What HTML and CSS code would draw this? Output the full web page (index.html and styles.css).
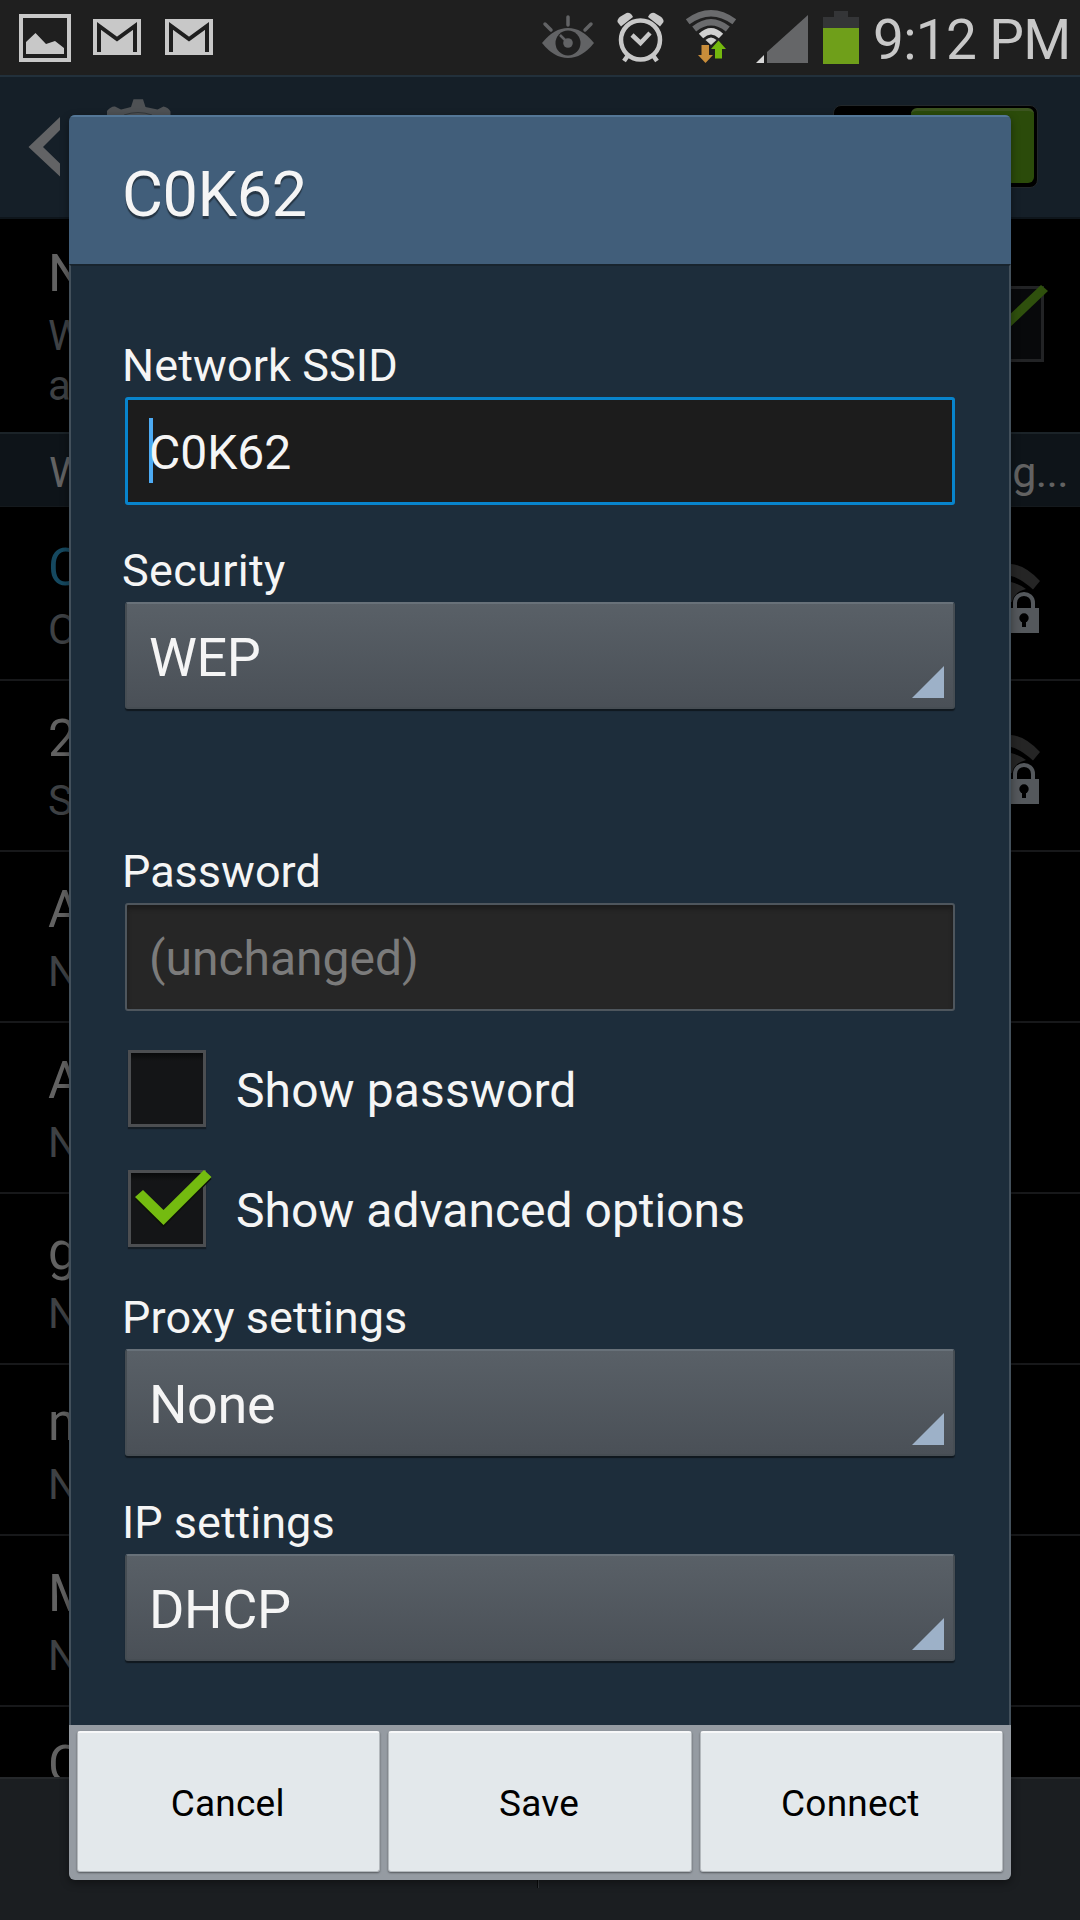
FILE: index.html
```html
<!DOCTYPE html>
<html lang="en">
<head>
<meta charset="utf-8">
<title>Wi-Fi</title>
<link rel="stylesheet" href="styles.css">
</head>
<body>
<div class="screen">
  <header class="status">
    <svg class="notifications" width="230" height="75" viewBox="0 0 230 75">
      <path fill="none" stroke="#c8c8c8" stroke-width="4" d="M21 16h48v44H21z"/>
      <path fill="#c8c8c8" d="M26 54V42l9.500-9L46 44l9-3 9 7v6z"/>
      <g id="mail">
        <path fill="#c8c8c8" d="M93 19h48v36H93z"/>
        <path fill="none" stroke="#1f1f1f" stroke-width="4" d="M99 52V26l18 13 18-13v26"/>
      </g>
      <use href="#mail" x="72"/>
    </svg>
    <div class="indicators">
      <svg width="330" height="75" viewBox="540 0 330 75">
        <g fill="none" stroke="#626365" stroke-width="3.500" stroke-linecap="round">
          <path d="M568 17v8M545 24l6 6M591 24l-6 6"/>
        </g>
        <path fill="#626365" d="M542 43q12-15 26-15t26 15q-12 15-26 15t-26-15z"/>
        <circle cx="568" cy="43" r="12.500" fill="#1f1f1f"/>
        <circle cx="568" cy="43" r="4.800" fill="#626365"/>
        <path stroke="#626365" stroke-width="2.500" d="M560 35l6 6"/>
        <g fill="none" stroke="#c8c8c8">
          <circle cx="640.500" cy="40" r="19.500" stroke-width="4.500"/>
          <path stroke-width="4.500" d="M632 35l8.500 8 9.500-10M629 54l-5 7M652 54l5 7"/>
        </g>
        <path fill="#c8c8c8" d="M621 26.500L617.500 22q-.5-3 3-5.500l6-3.500q4-1 6.500 4z"/>
        <path fill="#c8c8c8" d="M660 26.500l3.500-4.500q.5-3-3-5.500l-6-3.500q-4-1-6.500 4z"/>
        <g fill="none" stroke-width="6.300">
          <path stroke="#6a6b6d" d="M687.700 21.700q23.300-17 46.600 0"/>
          <path stroke="#6a6b6d" d="M694.200 29q16.800-13.500 33.600 0"/>
          <path stroke="#d0d0d0" d="M701 36q10-9.500 20 0"/>
        </g>
        <path fill="#d0d0d0" d="M705.500 40q5.500-5 11 0l-5.500 5z"/>
        <path fill="#c98d3a" d="M701.500 45h7.500v10h4l-7.500 8-7.500-8h3.500z"/>
        <path fill="#74b80e" d="M715 58.500V49h-4l7.500-8.500L726 49h-4v9.500z"/>
        <path fill="#d8d8d8" d="M756 63l8-8v8z"/>
        <path fill="#656668" d="M767 63V52l41-37v48z"/>
        <path fill="#343537" d="M834 11h14v6h11v11h-36V17h11z"/>
        <path fill="#6f9f1a" d="M823 28h36v36h-36z"/>
      </svg>
      <span class="clock">9:12 PM</span>
    </div>
  </header>

  <nav class="action-bar">
    <svg width="200" height="140" viewBox="0 77 200 140">
      <path fill="#626365" d="M60 117v13l-17 17 17 16.500v13L28.500 147z"/>
      <path fill="#4e5154" d="M107 115v-4q4-5 8-4.500l6 3 10-2.500 2.500-7.700h9.500l2.500 7.700 12 2.500 6-3q5 1 7 5v4z"/>
      <path fill="none" stroke="#34383b" d="M124 115q14-5 28 0"/>
    </svg>
    <span class="toggle"><span class="toggle-on"></span></span>
  </nav>

  <main class="list">
    <section class="notify">
      <div class="notify-text"><p class="name">N</p><p class="note">W</p><p class="note">a</p></div>
      <svg width="84" height="80" viewBox="0 0 84 80">
        <path fill="#08090b" stroke="#222325" stroke-width="3" d="M3.500 3.500h72v73h-72z"/>
        <path fill="#2f500d" d="M40 33L74 1l7 6-41 39z"/>
      </svg>
    </section>
    <div class="section-title"><span>W</span><span>g...</span></div>
    <section class="row">
      <div><p class="name current">C</p><p class="note">O</p></div>
      <svg class="secured" width="62" height="72" viewBox="980 562 62 72">
        <g id="lock-wifi">
          <path fill="#252525" d="M980 564h31q14 1 29 17l-7 8.500q-12-11-22-13.500h-31z"/>
          <path fill="#252525" d="M980 582h31q8 2 15 7-12 3-14 13h-32z"/>
          <path fill="none" stroke="#54585c" stroke-width="4" d="M1015 608v-5c0-12 18-12 18 0v5"/>
          <path fill="#54585c" d="M1009 608h30v25h-30z"/>
          <circle cx="1024" cy="618" r="4.700" fill="#000"/>
          <path fill="#000" d="M1022 619h4v8h-4z"/>
        </g>
      </svg>
    </section>
    <section class="row">
      <div><p class="name">2</p><p class="note">S</p></div>
      <svg class="secured" width="62" height="72" viewBox="980 562 62 72"><use href="#lock-wifi"/></svg>
    </section>
    <section class="row"><div><p class="name">A</p><p class="note">N</p></div></section>
    <section class="row"><div><p class="name">A</p><p class="note">N</p></div></section>
    <section class="row"><div><p class="name">g</p><p class="note">N</p></div></section>
    <section class="row"><div><p class="name">n</p><p class="note">N</p></div></section>
    <section class="row"><div><p class="name">M</p><p class="note">N</p></div></section>
    <section class="row"><div><p class="name">C</p></div></section>
  </main>
  <footer class="bottom-bar"><span class="divider"></span></footer>

  <div class="dialog">
    <h1 class="dialog-title">C0K62</h1>
    <div class="dialog-body">
      <label class="label ssid">Network SSID</label>
      <div class="input focused"><span class="caret"></span><span class="value">C0K62</span></div>
      <label class="label security">Security</label>
      <div class="select wep"><span>WEP</span><i class="corner"></i></div>
      <label class="label password">Password</label>
      <div class="input"><span class="hint">(unchanged)</span></div>
      <div class="check">
        <span class="box"></span>
        <span>Show password</span>
      </div>
      <div class="check second">
        <span class="box"><svg class="tick" width="84" height="60" viewBox="0 0 84 60"><path fill="#0c1207" d="M1 29l8-7 20.500 20L70 2l7.500 7L29.500 57.500z"/><path fill="#74bb10" d="M1 27l8-7 20.500 20L70 0l7.500 7L29.500 55z"/></svg></span>
        <span>Show advanced options</span>
      </div>
      <label class="label proxy">Proxy settings</label>
      <div class="select"><span>None</span><i class="corner"></i></div>
      <label class="label ip">IP settings</label>
      <div class="select"><span>DHCP</span><i class="corner"></i></div>
    </div>
    <div class="actions">
      <button>Cancel</button>
      <button>Save</button>
      <button>Connect</button>
    </div>
  </div>
</div>
</body>
</html>
```
FILE: styles.css
```css
* { box-sizing: border-box; }
body { margin: 0; background: #000; }
h1, p { margin: 0; font-weight: 400; }
svg { display: block; flex: none; }

.screen {
  position: relative;
  display: flex;
  flex-direction: column;
  width: 1080px;
  height: 1920px;
  overflow: hidden;
  background: #000;
  font-family: Roboto, "Liberation Sans", sans-serif;
  color: #f5f5f5;
}

.status {
  display: flex;
  flex: none;
  justify-content: space-between;
  height: 75px;
  background: #1f1f1f;
}
.indicators { display: flex; width: 540px; }
.clock {
  margin-left: 3px;
  font-size: 55px;
  line-height: 81px;
  letter-spacing: -0.7px;
  color: #c8c8c8;
  white-space: nowrap;
}

.action-bar {
  display: flex;
  flex: none;
  justify-content: space-between;
  height: 144px;
  border-top: 2px solid #22303b;
  border-bottom: 2px solid #0e151b;
  background: #151f28;
}
.toggle {
  display: flex;
  justify-content: flex-end;
  width: 205px;
  height: 83px;
  margin: 28px 42px 0 0;
  padding: 2px 3px 4px;
  border: 1px solid #22272a;
  border-radius: 8px;
  background: #000;
}
.toggle-on {
  width: 123px;
  border-top: 3px solid #3c5420;
  border-radius: 6px;
  background: #2b4b0a;
}

.list { display: flex; flex: none; flex-direction: column; height: 1558px; overflow: hidden; }
.notify {
  display: flex;
  flex: none;
  justify-content: space-between;
  height: 213px;
  padding: 25px 31px 0 48px;
}
.notify svg { margin-top: 40px; margin-right: -2px; }
.name { height: 60px; font-size: 51px; line-height: 60px; color: #626262; }
.name.current { color: #15485f; }
.note { height: 48px; margin-top: 8px; font-size: 42px; line-height: 48px; color: #3e4144; }
.note + .note { margin-top: 2px; }
.section-title {
  display: flex;
  flex: none;
  justify-content: space-between;
  height: 75px;
  padding: 0 12px 0 49px;
  border-top: 2px solid #1b2328;
  border-bottom: 1px solid #14191d;
  background: #0e1419;
  font-size: 43px;
  line-height: 76px;
  color: #626262;
}
.section-title span + span { letter-spacing: -0.6px; }
.row {
  display: flex;
  flex: none;
  justify-content: space-between;
  height: 171px;
  padding: 28px 38px 0 48px;
  border-bottom: 2px solid #17181a;
}
.section-title + .row { height: 174px; padding-top: 31px; }
.secured { margin-top: 24px; }
.bottom-bar {
  display: flex;
  flex: 1;
  justify-content: center;
  border-top: 2px solid #25282b;
  background: #1b1e21;
}
.divider {
  width: 2px;
  height: 109px;
  margin-right: 4px;
  border-left: 1px solid #090a0b;
  border-right: 1px solid #34373a;
}

.dialog {
  position: absolute;
  left: 69px;
  top: 115px;
  display: flex;
  flex-direction: column;
  width: 942px;
  height: 1765px;
  overflow: hidden;
  border-radius: 6px;
  box-shadow: 0 3px 8px rgba(0, 0, 0, 0.4);
}
.dialog-title {
  flex: none;
  height: 149px;
  padding-left: 53px;
  border-top: 2px solid #547797;
  background: #415e7a;
  font-size: 63px;
  letter-spacing: -0.4px;
  line-height: 156px;
  text-shadow: 0 3px 1px #263645;
}
.dialog-body {
  display: flex;
  flex: 1;
  flex-direction: column;
  padding: 0 54px;
  border: 2px solid #43505b;
  border-top: 2px solid #18242e;
  border-bottom: 0;
  background: #1d2d3b;
}
.label {
  flex: none;
  height: 53px;
  margin-left: -3px;
  font-size: 45px;
  letter-spacing: 0.1px;
  line-height: 53px;
  white-space: nowrap;
}
.ssid { margin-top: 73px; margin-bottom: 5px; }
.security { margin-top: 39px; margin-bottom: 5px; letter-spacing: 0.3px; }
.password { margin-top: 136px; margin-bottom: 5px; letter-spacing: 0; }
.proxy { margin-top: 44px; margin-bottom: 5px; }
.ip { margin-top: 40px; margin-bottom: 5px; letter-spacing: 0; }
.input {
  display: flex;
  flex: none;
  align-items: center;
  height: 108px;
  padding: 4px 22px 0;
  border: 2px solid #4e565d;
  border-radius: 3px;
  background: #262626;
  box-shadow: inset 0 4px 4px #1c1c1c;
  font-size: 48px;
  line-height: 56px;
}
.input.focused {
  padding: 3px 21px 0;
  border: 3px solid #0884cc;
  background: #1c1c1c;
  box-shadow: none;
}
.caret { width: 4px; height: 65px; margin: -5px -4px 0 0; background: #4dabf4; }
.hint { color: #7b7b7b; }
.select {
  display: flex;
  flex: none;
  align-items: center;
  justify-content: space-between;
  height: 107px;
  padding: 4px 9px 0 22px;
  border: 2px solid #464d53;
  border-top-color: #687179;
  border-radius: 3px;
  background: linear-gradient(#596067, #4a5057);
  box-shadow: 0 2px 1px #10181f;
  font-size: 54px;
  letter-spacing: -0.4px;
}
.corner {
  align-self: flex-end;
  width: 32px;
  height: 32px;
  margin-bottom: 9px;
  background: #9db1c8;
  clip-path: polygon(100% 0, 100% 100%, 0 100%);
}
.check {
  display: flex;
  flex: none;
  align-items: center;
  gap: 30px;
  height: 78px;
  margin: 38px 0 0 3px;
  font-size: 48px;
  letter-spacing: 0.1px;
  line-height: 60px;
  white-space: nowrap;
}
.check > span + span { padding-top: 5px; }
.check.second { margin-top: 42px; letter-spacing: 0; }
.box {
  position: relative;
  width: 78px;
  height: 77px;
  border: 3px solid #4c4e51;
  background: linear-gradient(#08090a, #141517 8px);
  box-shadow: 0 2px 1px #141d25;
}
.tick { position: absolute; left: 3px; top: -3px; }
.actions {
  display: grid;
  flex: none;
  grid-template-columns: repeat(3, 1fr);
  gap: 8px;
  height: 155px;
  padding: 6px 8px 8px 8px;
  background: #959ba2;
}
button {
  padding: 3px 2px 0 0;
  border: 1px solid #b4b9bd;
  border-top: 2px solid #f7f8f9;
  border-radius: 3px;
  background: #e3e8eb;
  box-shadow: 0 1px 2px #55595d;
  font-family: inherit;
  font-size: 37px;
  letter-spacing: 0.2px;
  color: #000;
}
```
